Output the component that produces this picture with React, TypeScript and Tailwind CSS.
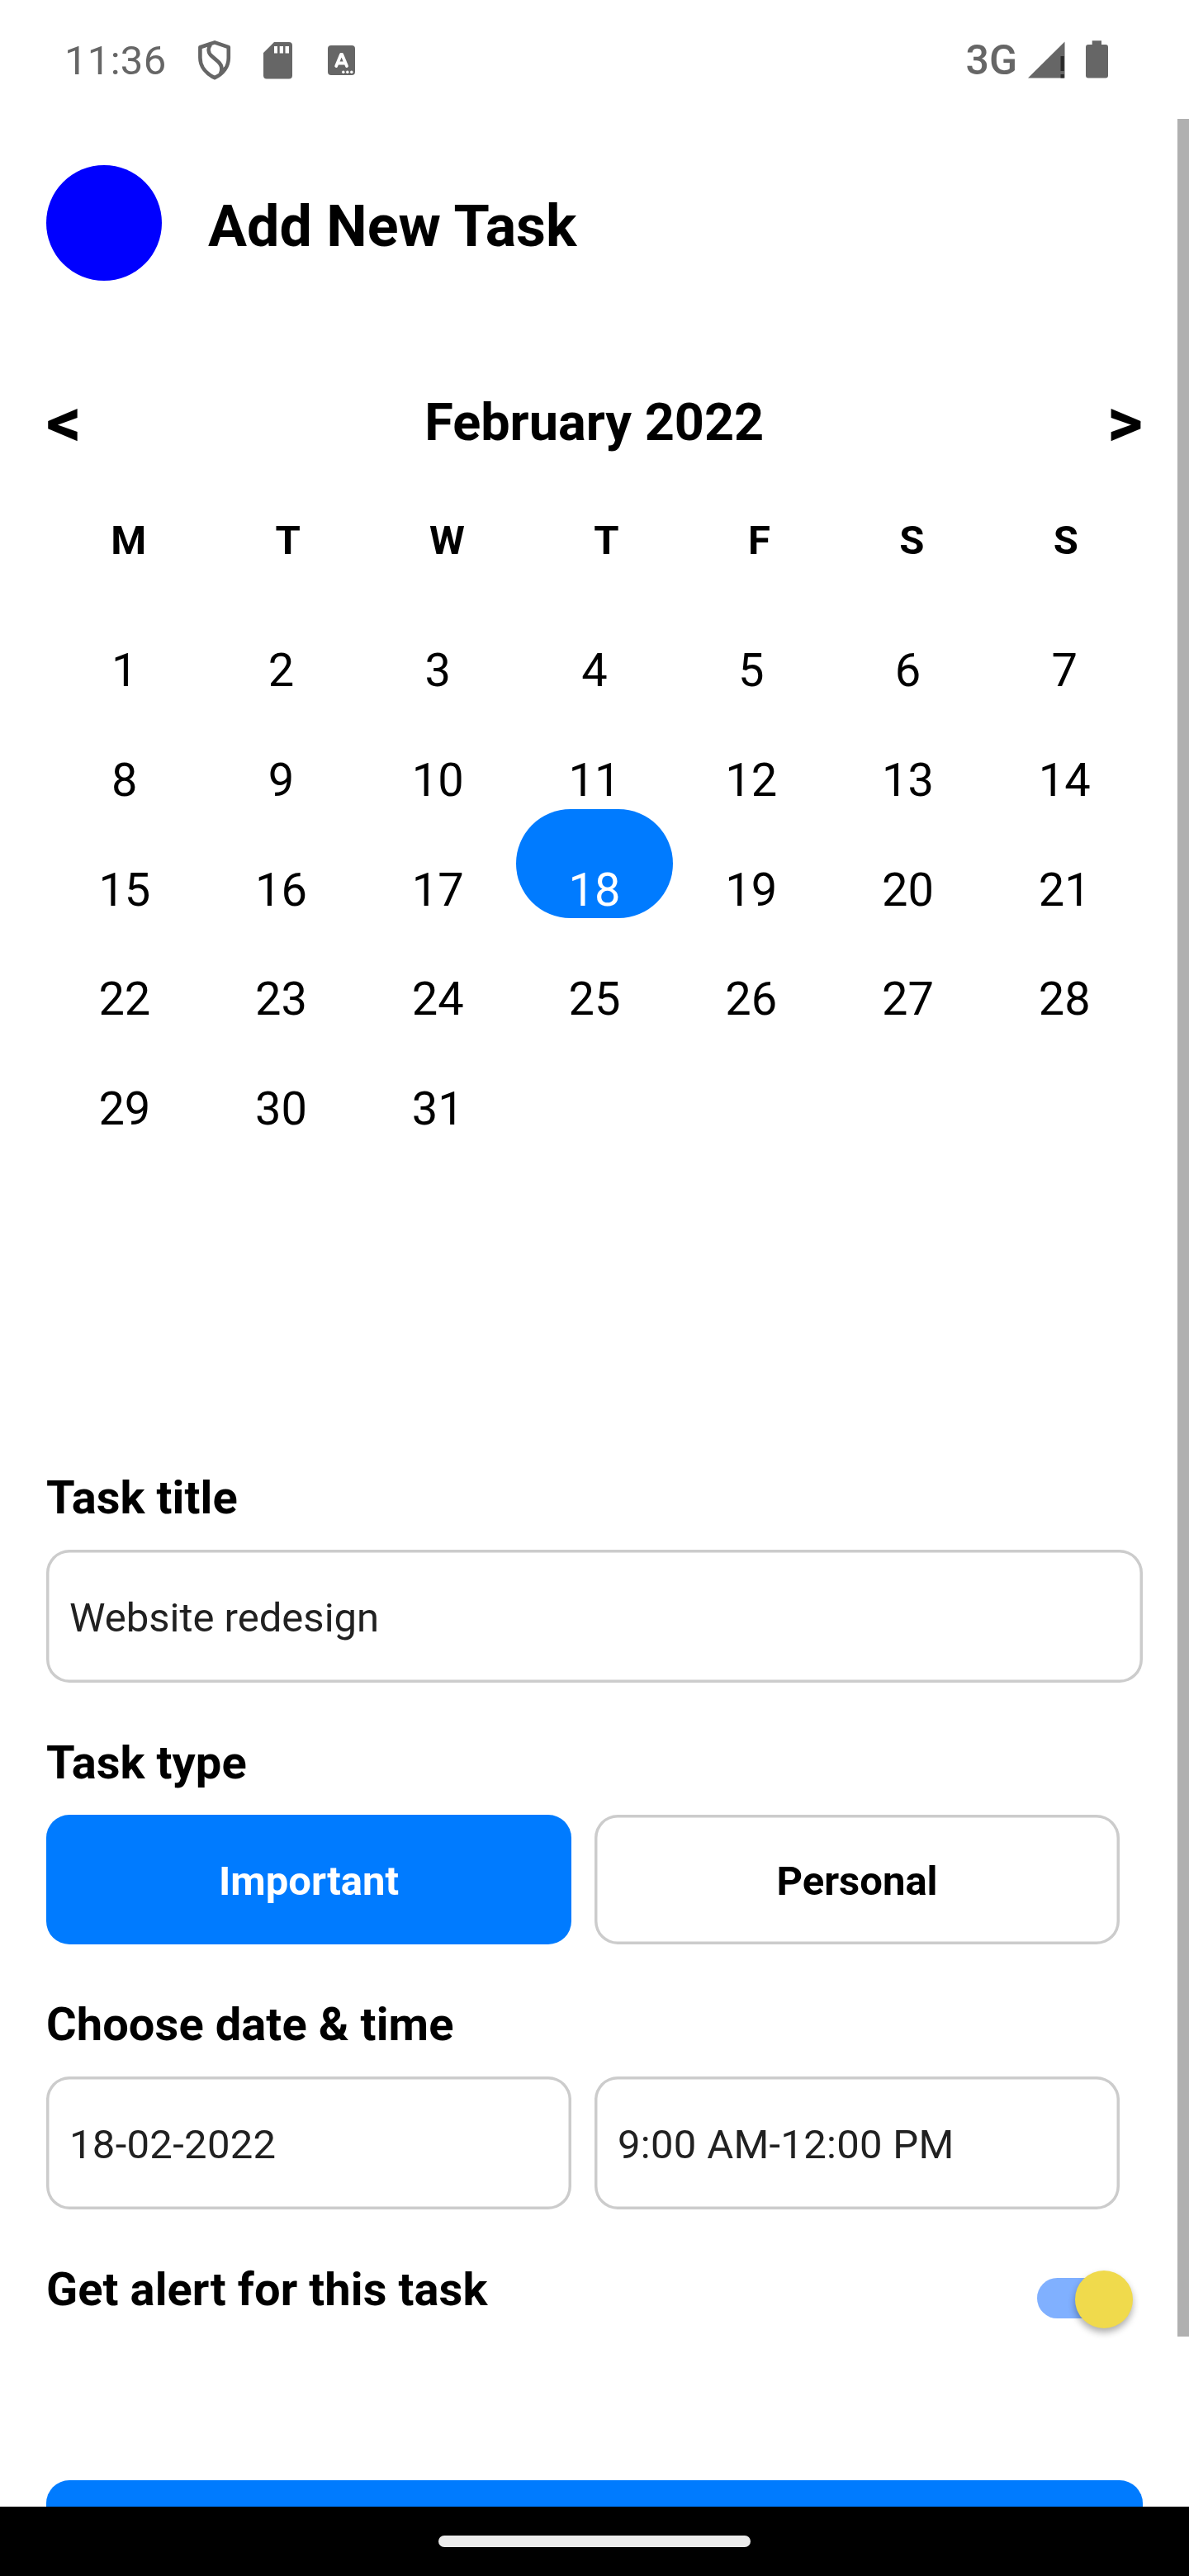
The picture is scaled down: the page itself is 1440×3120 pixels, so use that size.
import React from "react";

const weekdays = ["M", "T", "W", "T", "F", "S", "S"];
const days = Array.from({ length: 31 }, (_, i) => i + 1);

function StatusBar() {
  return (
    <div className="flex h-[144px] w-full items-start justify-between text-[#666666]">
      <div className="flex h-[144px] pl-[78px]">
        <span className="mt-[44px] w-[126px] whitespace-nowrap text-[49px] leading-[60px] tracking-[0.3px]">11:36</span>
        <svg className="ml-[36px] mt-[49px] h-[48px] w-[40px]" viewBox="0 0 40 48" fill="none" stroke="currentColor" strokeWidth="4.6" strokeLinejoin="round">
          <path d="M20 2.4 L36.8 8.2 V21 C36.8 32 30 40.5 20 45.2 C10 40.5 2.4 32 2.4 21 V8.2 Z" />
          <path d="M15 5 C11.5 9.5 12 15 16.5 19 L24 25.5 C29.5 30.5 29.5 35 27 40" />
          <path d="M29 35 L34.5 30 L29 39 Z" fill="currentColor" strokeWidth="1" />
        </svg>
        <svg className="ml-[39px] mt-[51px] h-[45px] w-[35px]" viewBox="0 0 35 45" fill="currentColor">
          <path fillRule="evenodd" d="M13 0 H31 Q35 0 35 4 V40.500 Q35 44.500 31 44.500 H4 Q0 44.500 0 40.500 V13 Z M13 5 V13.500 H17 V5 Z M19.700 5 V13.500 H24 V5 Z M26.500 5 V13.500 H31 V5 Z" />
        </svg>
        <svg className="ml-[43px] mt-[55px] h-[36px] w-[33px]" viewBox="0 0 33 36">
          <rect width="33" height="36" rx="4" fill="currentColor" />
          <path d="M10.200 25 L16 11 H17.200 L23 25 M12 21.500 H21" fill="none" stroke="#fff" strokeWidth="3.800" strokeLinecap="round" strokeLinejoin="round" />
          <g fill="#fff">
            <circle cx="18.800" cy="32.300" r="1.700" />
            <circle cx="23.800" cy="32.300" r="1.700" />
            <circle cx="28.800" cy="32.300" r="1.700" />
          </g>
        </svg>
      </div>
      <div className="flex h-[144px] pr-[98px]">
        <span className="mr-[13px] mt-[43px] whitespace-nowrap text-[50px] font-medium leading-[60px]">3G</span>
        <svg className="mt-[50px] h-[45px] w-[45px]" viewBox="0 0 45 45">
          <path d="M0 44.500 L44.500 0.500 V44.500 Z" fill="currentColor" />
          <path d="M39.500 18 H43.700 V36 H39.500 Z M39.500 40 H43.700 V44.500 H39.500 Z" fill="#2a2a2a" />
        </svg>
        <svg className="ml-[25px] mt-[49px] h-[46px] w-[27px]" viewBox="0 0 27 46" fill="currentColor">
          <path d="M7.700 0.300 H19 V5 H24 Q27 5 27 8 V42.500 Q27 45.500 24 45.500 H3 Q0 45.500 0 42.500 V8 Q0 5 3 5 H7.700 Z" />
        </svg>
      </div>
    </div>
  );
}

function Calendar() {
  return (
    <section className="flex flex-col">
      <div className="mt-[131px] flex h-[82px] items-center justify-between font-bold">
        <button className="text-[84px] leading-[82px]">&lt;</button>
        <h2 className="text-[63px] leading-[82px]">February 2022</h2>
        <button className="text-[84px] leading-[82px]">&gt;</button>
      </div>
      <div className="mt-[73px] flex h-[58px] justify-around text-[49px] font-bold leading-[58px]">
        {weekdays.map((day, i) => (
          <span key={i}>{day}</span>
        ))}
      </div>
      <div className="mt-[30px] grid h-[664px] grid-cols-7 grid-rows-5 text-center text-[56px] leading-[66px]">
        {days.map((day) => (
          <div key={day} className={day === 18 ? "rounded-[70px] bg-[#007bff] pt-[65px] text-white" : "pt-[65px]"}>
            {day}
          </div>
        ))}
      </div>
    </section>
  );
}

function Label({ children }: { children: React.ReactNode }) {
  return <h3 className="h-[66px] text-[56px] font-bold leading-[66px] tracking-[0.08px]">{children}</h3>;
}

function Field({ value, numeric = false }: { value: string; numeric?: boolean }) {
  return (
    <div
      className={`flex h-[161px] flex-1 items-center rounded-[28px] px-[28px] pt-[4px] text-[49px] leading-[58px] text-[#212121] shadow-[inset_0_0_0_3.5px_#cccccc] ${
        numeric ? "tracking-[0.3px]" : ""
      }`}
    >
      {value}
    </div>
  );
}

export default function App() {
  return (
    <div className="relative flex h-[3120px] w-[1440px] flex-col overflow-hidden bg-white font-['Roboto',sans-serif] text-black">
      <StatusBar />
      <main className="flex h-[2892px] flex-col overflow-hidden px-[56px]">
        <header className="mt-[56px] flex h-[140px] items-center">
          <div className="size-[140px] rounded-full bg-[#0000ff]" />
          <h1 className="ml-[56px] mt-[8px] text-[70px] font-bold leading-[82px]">Add New Task</h1>
        </header>
        <Calendar />
        <div className="mt-[403px]">
          <Label>Task title</Label>
        </div>
        <div className="mt-[30px] flex">
          <Field value="Website redesign" />
        </div>
        <div className="mt-[64px]">
          <Label>Task type</Label>
        </div>
        <div className="mt-[30px] flex gap-[28px] text-[49px] font-bold leading-[58px]">
          <button className="h-[157px] w-[636px] rounded-[28px] bg-[#007bff] pt-[5px] text-white">Important</button>
          <button className="h-[157px] w-[636px] rounded-[28px] pt-[5px] shadow-[inset_0_0_0_3.5px_#cccccc]">Personal</button>
        </div>
        <div className="mt-[64px]">
          <Label>Choose date &amp; time</Label>
        </div>
        <div className="mt-[30px] flex gap-[28px] pr-[28px]">
          <Field value="18-02-2022" numeric />
          <Field value="9:00 AM-12:00 PM" numeric />
        </div>
        <div className="mt-[64px] flex h-[94px] shrink-0 justify-between">
          <Label>Get alert for this task</Label>
          <div className="mr-[12px] mt-[19px] flex h-[49px] w-[116px] items-center justify-end rounded-l-full bg-[linear-gradient(to_right,#80b0ff_80px,transparent_80px)]">
            <div className="mt-[3px] size-[70px] shrink-0 rounded-full bg-[#f0da4c] shadow-[0_5px_8px_rgba(0,0,0,0.32)]" />
          </div>
        </div>
        <button className="mt-[170px] h-[170px] shrink-0 rounded-[28px] bg-[#007bff]" aria-label="Create task" />
      </main>
      <footer className="flex h-[84px] items-center justify-center bg-black">
        <div className="h-[14px] w-[378px] rounded-full bg-[#ebebeb]" />
      </footer>
      <div className="absolute right-0 top-[144px] h-[2686px] w-[14px] bg-[#b0b0b0]" />
    </div>
  );
}
